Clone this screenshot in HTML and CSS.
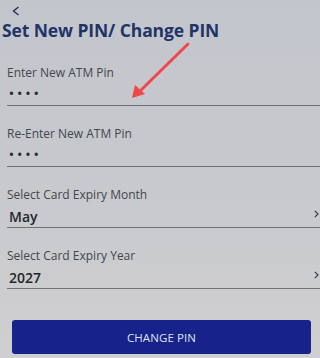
FILE: index.html
```html
<!DOCTYPE html>
<html lang="en">
<head>
    <meta charset="UTF-8">
    <meta name="viewport" content="width=device-width, initial-scale=1.0">
    <title>Set New PIN</title>
    <link rel="stylesheet" href="styles.css">
</head>
<body>
    <div class="screen">
        <div class="header">
            <a href="#" class="back-btn" aria-label="Back">
                <svg width="8" height="10" viewBox="0 0 8 10"><path d="M6.5 1 L1.5 5 L6.5 9" fill="none" stroke="#2b3550" stroke-width="1.5"/></svg>
            </a>
            <h1>Set New PIN/ Change PIN</h1>
        </div>

        <form class="pin-form">
            <div class="field">
                <label class="field-label">Enter New ATM Pin</label>
                <div class="field-value dots">••••</div>
            </div>

            <div class="field">
                <label class="field-label">Re-Enter New ATM Pin</label>
                <div class="field-value dots">••••</div>
            </div>

            <div class="field">
                <label class="field-label">Select Card Expiry Month</label>
                <div class="field-value select">
                    <span>May</span>
                    <svg class="chevron" width="5" height="8" viewBox="0 0 5 8"><path d="M0.8 0.8 L4 4 L0.8 7.2" fill="none" stroke="#2b3550" stroke-width="1.1"/></svg>
                </div>
            </div>

            <div class="field">
                <label class="field-label">Select Card Expiry Year</label>
                <div class="field-value select">
                    <span>2027</span>
                    <svg class="chevron" width="5" height="8" viewBox="0 0 5 8"><path d="M0.8 0.8 L4 4 L0.8 7.2" fill="none" stroke="#2b3550" stroke-width="1.1"/></svg>
                </div>
            </div>

            <div class="form-actions">
                <button type="button" class="btn">CHANGE PIN</button>
            </div>
        </form>

        <!-- annotation arrow over the first field -->
        <svg class="annotation" width="320" height="110" viewBox="0 0 320 110">
            <line x1="188" y1="44" x2="138" y2="93" stroke="#f04848" stroke-width="3" stroke-linecap="round"/>
            <polygon points="132,98 135,85 145,94" fill="#f04848"/>
        </svg>
    </div>
</body>
</html>
```

FILE: styles.css
```css
* {
    margin: 0;
    padding: 0;
    box-sizing: border-box;
}

body {
    font-family: "Open Sans", "Noto Sans", Arial, sans-serif;
    background-color: #c6c7cc;
    color: #333;
}

.screen {
    position: relative;
    width: 320px;
    height: 358px;
    overflow: hidden;
    background: linear-gradient(180deg, #c2c5cc 0%, #c8c9cd 50%, #cfcfd1 100%);
}

.header {
    padding: 6px 0 0 2px;
    height: 45px;
}

.back-btn {
    display: block;
    width: 8px;
    height: 10px;
    margin-left: 10px;
}

.back-btn svg {
    display: block;
}

.header h1 {
    font-size: 17.5px;
    line-height: 22px;
    font-weight: 700;
    color: #1f3468;
    margin-top: 3px;
    letter-spacing: -0.1px;
}

.pin-form {
    padding-left: 7px;
}

.field {
    padding-top: 20px;
    border-bottom: 1px solid #6f7177;
}

.field-label {
    display: block;
    font-size: 12px;
    line-height: 16px;
    color: #43464c;
}

.field-value {
    margin-top: 4px;
    height: 20px;
    font-size: 14px;
    line-height: 20px;
    font-weight: 600;
    color: #25272c;
    padding-left: 2px;
}

.dots {
    font-size: 13px;
    letter-spacing: 3.4px;
    color: #2a2c32;
    line-height: 17px;
}

.select {
    display: flex;
    justify-content: space-between;
    align-items: center;
}

.chevron {
    margin-right: 1px;
    margin-top: -6px;
}

.form-actions {
    margin-top: 31px;
    padding-left: 5px;
    padding-right: 9px;
}

.btn {
    display: block;
    width: 100%;
    height: 34px;
    background-color: #17228a;
    color: #dfe3ef;
    border: none;
    border-radius: 3px;
    font-family: inherit;
    font-size: 11.5px;
    letter-spacing: 0.1px;
    cursor: pointer;
}

.annotation {
    position: absolute;
    top: 0;
    left: 0;
    pointer-events: none;
}
```
